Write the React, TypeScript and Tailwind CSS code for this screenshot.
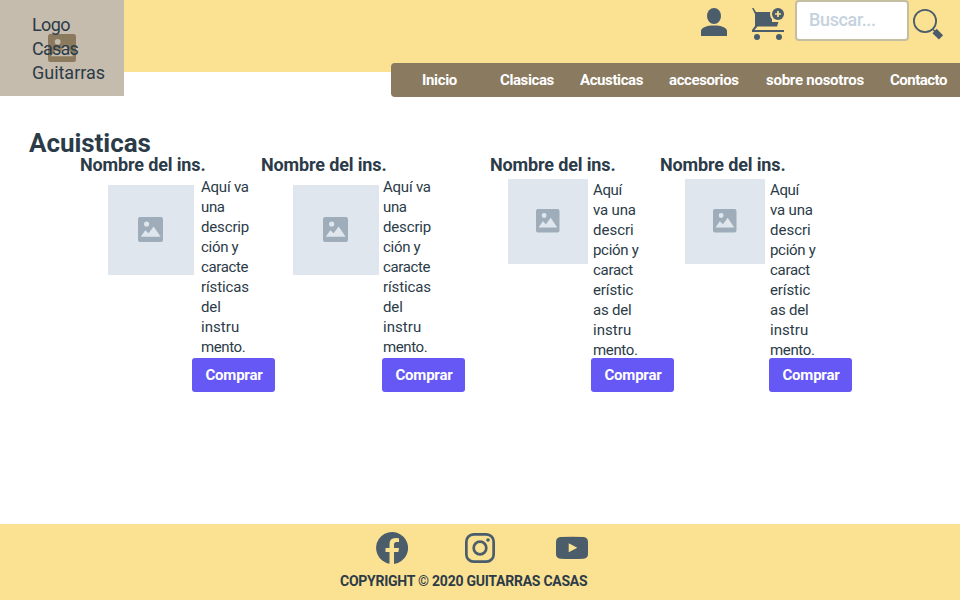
import type { ReactNode } from "react";

function Picture({ className }: { className: string }) {
  return (
    <svg viewBox="0 0 24 24" className={className} fill="currentColor">
      <path
        fillRule="evenodd"
        d="M2 0H22Q24 0 24 2V22Q24 24 22 24H2Q0 24 0 22V2Q0 0 2 0ZM8.3 4.2A2.5 2.5 0 1 0 8.3 9.2A2.5 2.5 0 1 0 8.3 4.2ZM2.6 19H21.7L15 9L10.2 15.6L7 12.6Z"
      />
    </svg>
  );
}

function Line({ className, children }: { className: string; children: ReactNode }) {
  return <div className={`whitespace-nowrap ${className}`}>{children}</div>;
}

type CardProps = { width: string; picture: string; icon: string; text: string; button: string; lines: [string, string][] };

function Card({ width, picture, icon, text, button, lines }: CardProps) {
  return (
    <article className={`grid shrink-0 grid-rows-[24px_181px_34px] ${width}`}>
      <h2 className="whitespace-nowrap text-[18px] leading-6 font-bold tracking-[-0.14px]">Nombre del ins.</h2>
      <div className="flex items-start">
        <div className={`flex shrink-0 items-center justify-center bg-[#dfe6ee] text-[#9eadb9] ${picture}`}>
          <Picture className={icon} />
        </div>
        <div className={`text-[15px] leading-5 ${text}`}>
          {lines.map(([line, tracking]) => (
            <Line key={line} className={tracking}>{line}</Line>
          ))}
        </div>
      </div>
      <button className={`h-[34px] w-[83px] rounded-[3px] bg-[#6558f5] pl-px text-[15px] leading-[34px] font-bold tracking-[-0.22px] text-white ${button}`}>
        Comprar
      </button>
    </article>
  );
}

const wide: [string, string][] = [
  ["Aquí va", "tracking-[-0.22px]"],
  ["una", "tracking-[-0.35px]"],
  ["descrip", "tracking-[-0.15px]"],
  ["ción y", "tracking-[-0.3px]"],
  ["caracte", "tracking-[-0.35px]"],
  ["rísticas", "tracking-[-0.12px]"],
  ["del", "tracking-[-0.1px]"],
  ["instru", "tracking-[0.05px]"],
  ["mento.", "tracking-[-0.4px]"],
];

const narrow: [string, string][] = [
  ["Aquí", "tracking-[-0.35px]"],
  ["va una", "tracking-[-0.15px]"],
  ["descri", "tracking-[0px]"],
  ["pción y", "tracking-[-0.3px]"],
  ["caract", "tracking-[-0.3px]"],
  ["erístic", "tracking-[-0.1px]"],
  ["as del", "tracking-[-0.2px]"],
  ["instru", "tracking-[0.05px]"],
  ["mento.", "tracking-[-0.35px]"],
];

export default function App() {
  return (
    <div className="flex h-[600px] w-[960px] flex-col overflow-hidden bg-white font-['Roboto',sans-serif] text-[#2b3b48]">
      <header className="flex h-[72px] shrink-0 items-start bg-[#fbe192]">
        <div className="relative h-24 w-[124px] shrink-0 bg-[#c5bcae] pt-[13px] pl-8 text-[18px] leading-6">
          <Picture className="absolute top-[34px] left-12 size-7 text-[#8b7a5e]" />
          <div className="relative">
            <Line className="tracking-[-0.6px]">Logo</Line>
            <Line className="tracking-[-0.8px]">Casas</Line>
            <Line className="tracking-[-0.02px]">Guitarras</Line>
          </div>
        </div>
        <div className="flex min-w-0 flex-1 flex-col items-end">
          <div className="flex h-[63px] items-start text-[#4b5d6b]">
            <svg viewBox="0 0 28 30" className="mt-[7px] mr-6 h-[30px] w-7" fill="currentColor">
              <ellipse cx="14" cy="9" rx="7" ry="8" />
              <path d="M1 29V24C1 20.5 7 18.5 14 18.5S27 20.5 27 24V29Z" />
            </svg>
            <svg viewBox="0 0 32 32" className="mt-2 mr-[11px] size-8" fill="currentColor">
              <path d="M0 0H1.5L4 4H20V14H26.5L25 18.5H5.5L2.5 22H32V24H0V22L3 18V6Z" />
              <circle cx="26" cy="6" r="8" className="fill-[#fbe192]" />
              <circle cx="26" cy="6" r="6" />
              <circle cx="5" cy="29" r="3" />
              <circle cx="27" cy="29" r="3" />
              <path d="M26 3V9M23 6H29" stroke="#fbe192" strokeWidth="1.7" />
            </svg>
            <div className="h-[41px] w-[114px] rounded-[4px] border-2 border-[#c6bea2] bg-white pl-3 text-[18px] leading-[35px] font-medium tracking-[-0.36px] text-[#c5d2de]">
              Buscar...
            </div>
            <svg viewBox="0 0 32 34" className="mt-[7px] mr-4 ml-[3px] h-[34px] w-8" fill="none" stroke="currentColor">
              <circle cx="13" cy="14" r="11.1" strokeWidth="1.8" />
              <path d="M20.5 22L23 24.5" strokeWidth="1.5" />
              <path d="M22.5 24L29 30.3" strokeWidth="6" />
            </svg>
          </div>
          <nav className="flex h-[34px] w-[569px] shrink-0 rounded-l-[4px] bg-[#8a7a5f] text-[15px] leading-[34px] font-bold whitespace-nowrap text-white">
            <a className="ml-[31px] w-[78px] tracking-[-0.35px]">Inicio</a>
            <a className="w-20 tracking-[-0.4px]">Clasicas</a>
            <a className="w-[89px] tracking-[-0.4px]">Acusticas</a>
            <a className="w-[97px] tracking-[-0.4px]">accesorios</a>
            <a className="w-[124px] tracking-[-0.25px]">sobre nosotros</a>
            <a className="tracking-[-0.5px]">Contacto</a>
          </nav>
        </div>
      </header>
      <main className="flex-1 pt-[55px]">
        <h1 className="h-[26px] pl-[29px] text-[26px] leading-8 font-bold tracking-[-0.05px]">Acuisticas</h1>
        <div className="flex pl-20">
          <Card width="w-[181px]" picture="mt-2 ml-7 h-[90px] w-[86px]" icon="mr-[2px] mb-px size-[25px]" text="ml-[7px]" button="ml-28" lines={wide} />
          <Card width="w-[229px]" picture="mt-2 ml-[31.5px] h-[90px] w-[86px]" icon="mr-px mb-px size-[25px]" text="ml-[4.5px]" button="ml-[121px]" lines={wide} />
          <Card width="w-[170px]" picture="mt-0.5 ml-[18px] h-[84.5px] w-20" icon="mb-px size-[23.5px]" text="mt-[3px] ml-[5px]" button="ml-[101px]" lines={narrow} />
          <Card width="w-[200px]" picture="mt-0.5 ml-[25px] h-[84.5px] w-20" icon="mb-px size-[23.5px]" text="mt-[3px] ml-[5px]" button="ml-[109px]" lines={narrow} />
        </div>
      </main>
      <footer className="flex h-[76px] shrink-0 flex-col bg-[#fbe192] pt-2">
        <div className="flex h-8 items-center pl-[376px] text-[#4b5d6b]">
          <svg viewBox="0 0 32 32" className="size-8" fill="currentColor">
            <path d="M13.5 31.8A16 16 0 1 1 18 31.9V20H22.4L23 16H18V12.5Q18 10 20.5 10H23V6.3Q21.5 6 19.5 6Q13.5 6 13.5 12V16H9.5V20H13.5Z" />
          </svg>
          <svg viewBox="0 0 30 30" className="ml-[57px] size-[30px]" fill="none" stroke="currentColor">
            <rect x="1.35" y="1.35" width="27.3" height="27.3" rx="7.2" strokeWidth="2.7" />
            <circle cx="15" cy="15" r="6.3" strokeWidth="2.7" />
            <circle cx="23" cy="7" r="1.8" fill="currentColor" stroke="none" />
          </svg>
          <svg viewBox="0 0 32 24" className="ml-[61px] h-6 w-8" fill="currentColor">
            <path fillRule="evenodd" d="M4.5 1Q16 0.4 27.5 1Q32 1.3 32 6V18Q32 22.3 27.5 22.7Q16 23.3 4.5 22.7Q0 22.3 0 18V6Q0 1.3 4.5 1ZM12.7 7.3V16.3L21.3 11.8Z" />
          </svg>
        </div>
        <p className="mt-[7px] pl-[340px] text-[14px] leading-5 font-bold tracking-[-0.25px]">COPYRIGHT © 2020 GUITARRAS CASAS</p>
      </footer>
    </div>
  );
}
